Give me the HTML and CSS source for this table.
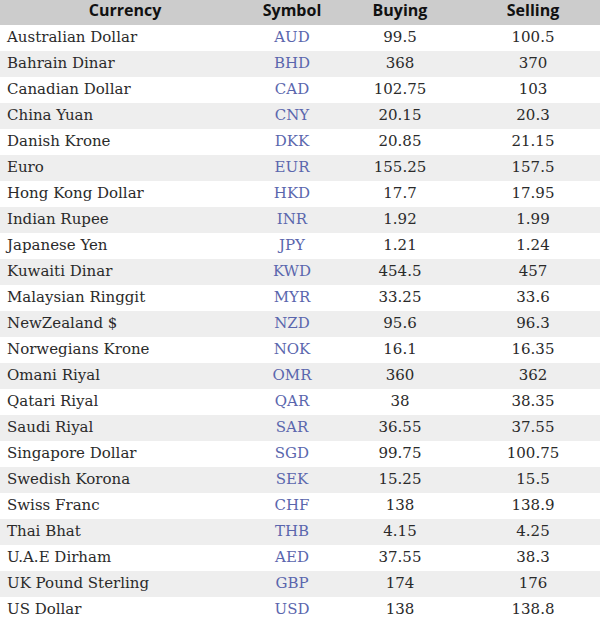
FILE: index.html
```html
<!DOCTYPE html>
<html>
<head>
<meta charset="utf-8">
<link rel="stylesheet" href="styles.css">
</head>
<body>
<table class="rates">
<colgroup><col class="c1"><col class="c2"><col class="c3"><col class="c4"></colgroup>
<thead>
<tr><th>Currency</th><th>Symbol</th><th>Buying</th><th>Selling</th></tr>
</thead>
<tbody>
<tr><td>Australian Dollar</td><td class="sym">AUD</td><td>99.5</td><td>100.5</td></tr>
<tr><td>Bahrain Dinar</td><td class="sym">BHD</td><td>368</td><td>370</td></tr>
<tr><td>Canadian Dollar</td><td class="sym">CAD</td><td>102.75</td><td>103</td></tr>
<tr><td>China Yuan</td><td class="sym">CNY</td><td>20.15</td><td>20.3</td></tr>
<tr><td>Danish Krone</td><td class="sym">DKK</td><td>20.85</td><td>21.15</td></tr>
<tr><td>Euro</td><td class="sym">EUR</td><td>155.25</td><td>157.5</td></tr>
<tr><td>Hong Kong Dollar</td><td class="sym">HKD</td><td>17.7</td><td>17.95</td></tr>
<tr><td>Indian Rupee</td><td class="sym">INR</td><td>1.92</td><td>1.99</td></tr>
<tr><td>Japanese Yen</td><td class="sym">JPY</td><td>1.21</td><td>1.24</td></tr>
<tr><td>Kuwaiti Dinar</td><td class="sym">KWD</td><td>454.5</td><td>457</td></tr>
<tr><td>Malaysian Ringgit</td><td class="sym">MYR</td><td>33.25</td><td>33.6</td></tr>
<tr><td>NewZealand $</td><td class="sym">NZD</td><td>95.6</td><td>96.3</td></tr>
<tr><td>Norwegians Krone</td><td class="sym">NOK</td><td>16.1</td><td>16.35</td></tr>
<tr><td>Omani Riyal</td><td class="sym">OMR</td><td>360</td><td>362</td></tr>
<tr><td>Qatari Riyal</td><td class="sym">QAR</td><td>38</td><td>38.35</td></tr>
<tr><td>Saudi Riyal</td><td class="sym">SAR</td><td>36.55</td><td>37.55</td></tr>
<tr><td>Singapore Dollar</td><td class="sym">SGD</td><td>99.75</td><td>100.75</td></tr>
<tr><td>Swedish Korona</td><td class="sym">SEK</td><td>15.25</td><td>15.5</td></tr>
<tr><td>Swiss Franc</td><td class="sym">CHF</td><td>138</td><td>138.9</td></tr>
<tr><td>Thai Bhat</td><td class="sym">THB</td><td>4.15</td><td>4.25</td></tr>
<tr><td>U.A.E Dirham</td><td class="sym">AED</td><td>37.55</td><td>38.3</td></tr>
<tr><td>UK Pound Sterling</td><td class="sym">GBP</td><td>174</td><td>176</td></tr>
<tr><td>US Dollar</td><td class="sym">USD</td><td>138</td><td>138.8</td></tr>
</tbody>
</table>
</body>
</html>
```
FILE: styles.css
```css
html, body {
  margin: 0;
  padding: 0;
  background: #fff;
}
.rates {
  width: 600px;
  border-collapse: collapse;
  table-layout: fixed;
  font-family: "DejaVu Serif", "Liberation Serif", serif;
  font-size: 15px;
  color: #2a2a2a;
}
.c1 { width: 250px; }
.c2 { width: 84px; }
.c3 { width: 132px; }
.c4 { width: 134px; }
.rates th {
  background: #cccccc;
  height: 25px;
  padding: 0;
  font-family: "Open Sans", "Noto Sans", sans-serif;
  font-weight: 700;
  font-size: 16px;
  color: #111;
  text-align: center;
  line-height: 20px;
  vertical-align: top;
}
.rates td {
  height: 26px;
  padding: 0 0 2px;
  box-sizing: border-box;
  text-align: center;
  line-height: 24px;
}
.rates td:first-child {
  text-align: left;
  padding-left: 7px;
}
.rates tbody tr:nth-child(even) td {
  background: #eeeeee;
}
.rates td.sym {
  color: #5a66ad;
}
```
